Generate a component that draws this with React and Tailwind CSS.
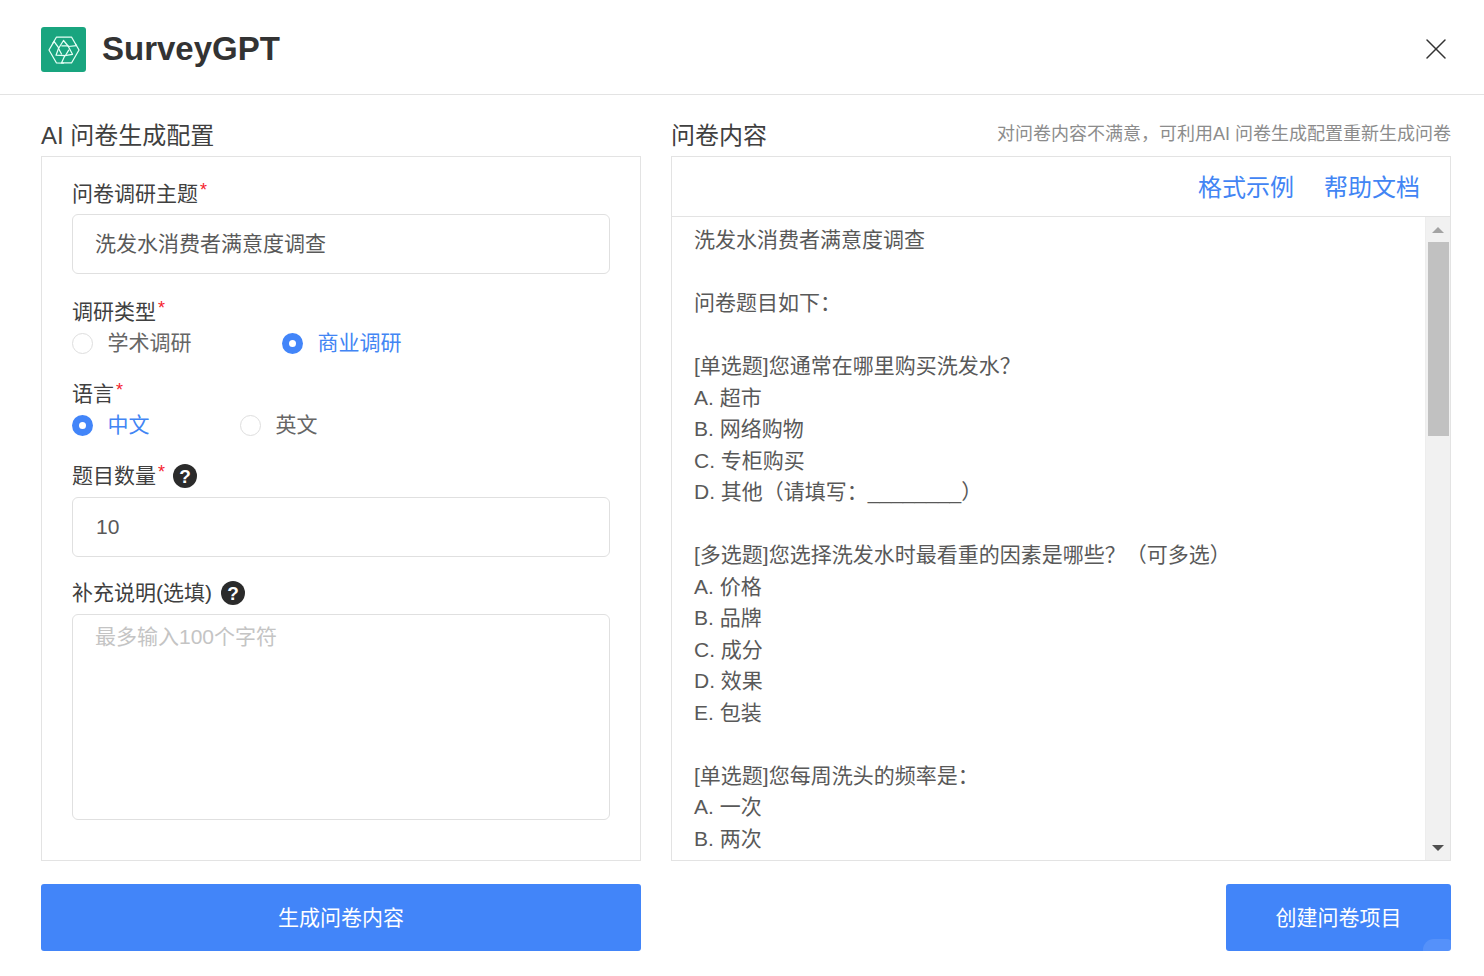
import React from 'react';
import { X } from 'lucide-react';

const FONT = "font-['Liberation_Sans','Noto_Sans_CJK_SC',sans-serif]";

const CONTENT = [
  '洗发水消费者满意度调查',
  '',
  '问卷题目如下：',
  '',
  '[单选题]您通常在哪里购买洗发水？',
  'A. 超市',
  'B. 网络购物',
  'C. 专柜购买',
  'D. 其他（请填写：________）',
  '',
  '[多选题]您选择洗发水时最看重的因素是哪些？（可多选）',
  'A. 价格',
  'B. 品牌',
  'C. 成分',
  'D. 效果',
  'E. 包装',
  '',
  '[单选题]您每周洗头的频率是：',
  'A. 一次',
  'B. 两次',
];

const LOGO_ARM = 'M6 10 L9.5 4 L24.5 4 L29.5 12.7 L21.5 13.5 L16.5 7.5 L11.5 15.5 L14.5 21';

const Logo = () => (
  <div className="flex h-[45px] w-[45px] items-center justify-center rounded-[3px] bg-[#19a57f]">
    <svg width="34" height="34" viewBox="0 0 34 34" fill="none" stroke="#e6fff6" strokeWidth="1.25" strokeLinejoin="round" strokeLinecap="round">
      <path d={LOGO_ARM} />
      <path d={LOGO_ARM} transform="rotate(120 17 17)" />
      <path d={LOGO_ARM} transform="rotate(240 17 17)" />
    </svg>
  </div>
);

const Help = ({ offset }) => (
  <span className={`flex h-6 w-6 items-center justify-center rounded-full bg-[#2b2b2b] text-[19px] font-bold leading-none text-white ${offset}`}>?</span>
);

const Label = ({ text, required, help }) => (
  <div className="flex h-[34px] items-center text-[21px] leading-[34px] text-[#404040]">
    <span>{text}</span>
    {required && <span className="relative -top-1 ml-[2px] text-[18px] leading-none text-[#f5222d]">*</span>}
    {help && <Help offset={required ? 'ml-2' : 'ml-[9px]'} />}
  </div>
);

const Radio = ({ label, checked, width }) => (
  <label className={`flex items-center ${width}`}>
    {checked ? (
      <span className="flex h-[21px] w-[21px] items-center justify-center rounded-full bg-[#4285f9]">
        <span className="h-[7px] w-[7px] rounded-full bg-white" />
      </span>
    ) : (
      <span className="h-[21px] w-[21px] rounded-full border border-[#dedede] bg-white" />
    )}
    <span className={`ml-[14.5px] text-[21px] leading-[30px] ${checked ? 'text-[#4285f4]' : 'text-[#666666]'}`}>{label}</span>
  </label>
);

const Scrollbar = () => (
  <div className="flex w-[25px] shrink-0 flex-col items-center border-l border-[#ededed] bg-[#f1f1f1]">
    <div className="flex h-[25px] w-full items-center justify-center">
      <span className="h-0 w-0 border-x-[6px] border-b-[6px] border-x-transparent border-b-[#a3a3a3]" />
    </div>
    <div className="h-[194px] w-[21px] bg-[#c1c1c1]" />
    <div className="flex-1" />
    <div className="flex h-[25px] w-full items-center justify-center">
      <span className="h-0 w-0 border-x-[6px] border-t-[6px] border-x-transparent border-t-[#505050]" />
    </div>
  </div>
);

const App = () => {
  return (
    <div className={`h-[976px] w-[1484px] overflow-hidden bg-white ${FONT}`}>
      <header className="flex h-[95px] items-center justify-between border-b border-[#e3e3e3] pl-[41px] pr-[30px] pt-[5px]">
        <div className="flex items-center">
          <Logo />
          <span className="ml-[16px] pb-[3px] text-[33px] font-bold leading-none text-[#333333]">SurveyGPT</span>
        </div>
        <X size={36} strokeWidth={1} className="-mt-[2px] text-[#333333]" />
      </header>

      <main className="pl-[41px] pr-[33px]">
        <div className="flex gap-[30px]">
          <section className="w-[600px] shrink-0">
            <h2 className="flex h-[61px] items-end pb-[3px] text-[24px] font-normal leading-[34px] text-[#404040]">AI 问卷生成配置</h2>
            <div className="h-[705px] border border-[#e3e3e3] px-[30px] pt-[20px]">
              <Label text="问卷调研主题" required />
              <div className="mt-[3px] flex h-[60px] items-center rounded-md border border-[#e0e0e0] px-[22px] pb-[1px] text-[21px] text-[#595959]">
                洗发水消费者满意度调查
              </div>
              <div className="mt-[21px]">
                <Label text="调研类型" required />
                <div className="-mt-[1px] flex h-[30px] items-center">
                  <Radio label="学术调研" width="w-[210px]" />
                  <Radio label="商业调研" checked />
                </div>
              </div>
              <div className="mt-[19px]">
                <Label text="语言" required />
                <div className="-mt-[1px] flex h-[30px] items-center">
                  <Radio label="中文" checked width="w-[168px]" />
                  <Radio label="英文" />
                </div>
              </div>
              <div className="mt-[19px]">
                <Label text="题目数量" required help />
                <div className="mt-[4px] flex h-[60px] items-center rounded-md border border-[#e0e0e0] px-[23px] text-[21px] text-[#595959]">
                  10
                </div>
              </div>
              <div className="mt-[19px]">
                <Label text="补充说明(选填)" help />
                <div className="mt-[4px] h-[206px] rounded-md border border-[#e0e0e0] px-[22px] py-[6px] text-[21px] leading-[32px] text-[#c4c4c4]">
                  最多输入100个字符
                </div>
              </div>
            </div>
          </section>

          <section className="w-[780px] shrink-0">
            <div className="flex h-[61px] items-end justify-between">
              <h2 className="pb-[3px] text-[24px] font-normal leading-[34px] text-[#404040]">问卷内容</h2>
              <span className="pb-[8px] text-[18px] leading-[28px] text-[#8c8c8c]">对问卷内容不满意，可利用AI 问卷生成配置重新生成问卷</span>
            </div>
            <div className="flex h-[705px] flex-col border border-[#e3e3e3]">
              <div className="flex h-[60px] shrink-0 items-center justify-end gap-[30px] border-b border-[#e3e3e3] pr-[30px] pt-[2px] text-[24px] text-[#4285f4]">
                <span>格式示例</span>
                <span>帮助文档</span>
              </div>
              <div className="flex min-h-0 flex-1">
                <div className="flex-1 overflow-hidden px-[22px] pt-[7px] text-[21px] leading-[31.5px] text-[#595959]">
                  {CONTENT.map((line, i) => (
                    <div key={i} className="h-[31.5px] whitespace-pre">{line}</div>
                  ))}
                </div>
                <Scrollbar />
              </div>
            </div>
          </section>
        </div>

        <div className="mt-[23px] flex justify-between">
          <button className="h-[67px] w-[600px] rounded-[3px] bg-[#4285f9] text-[21px] text-white">生成问卷内容</button>
          <button className="relative h-[67px] w-[225px] overflow-hidden rounded-[3px] bg-[#4285f9] text-[21px] text-white">
            创建问卷项目
            <span className="absolute -bottom-[10px] -right-[6px] h-[22px] w-[34px] rounded-full bg-white/10" />
          </button>
        </div>
      </main>
    </div>
  );
};

export default App;
